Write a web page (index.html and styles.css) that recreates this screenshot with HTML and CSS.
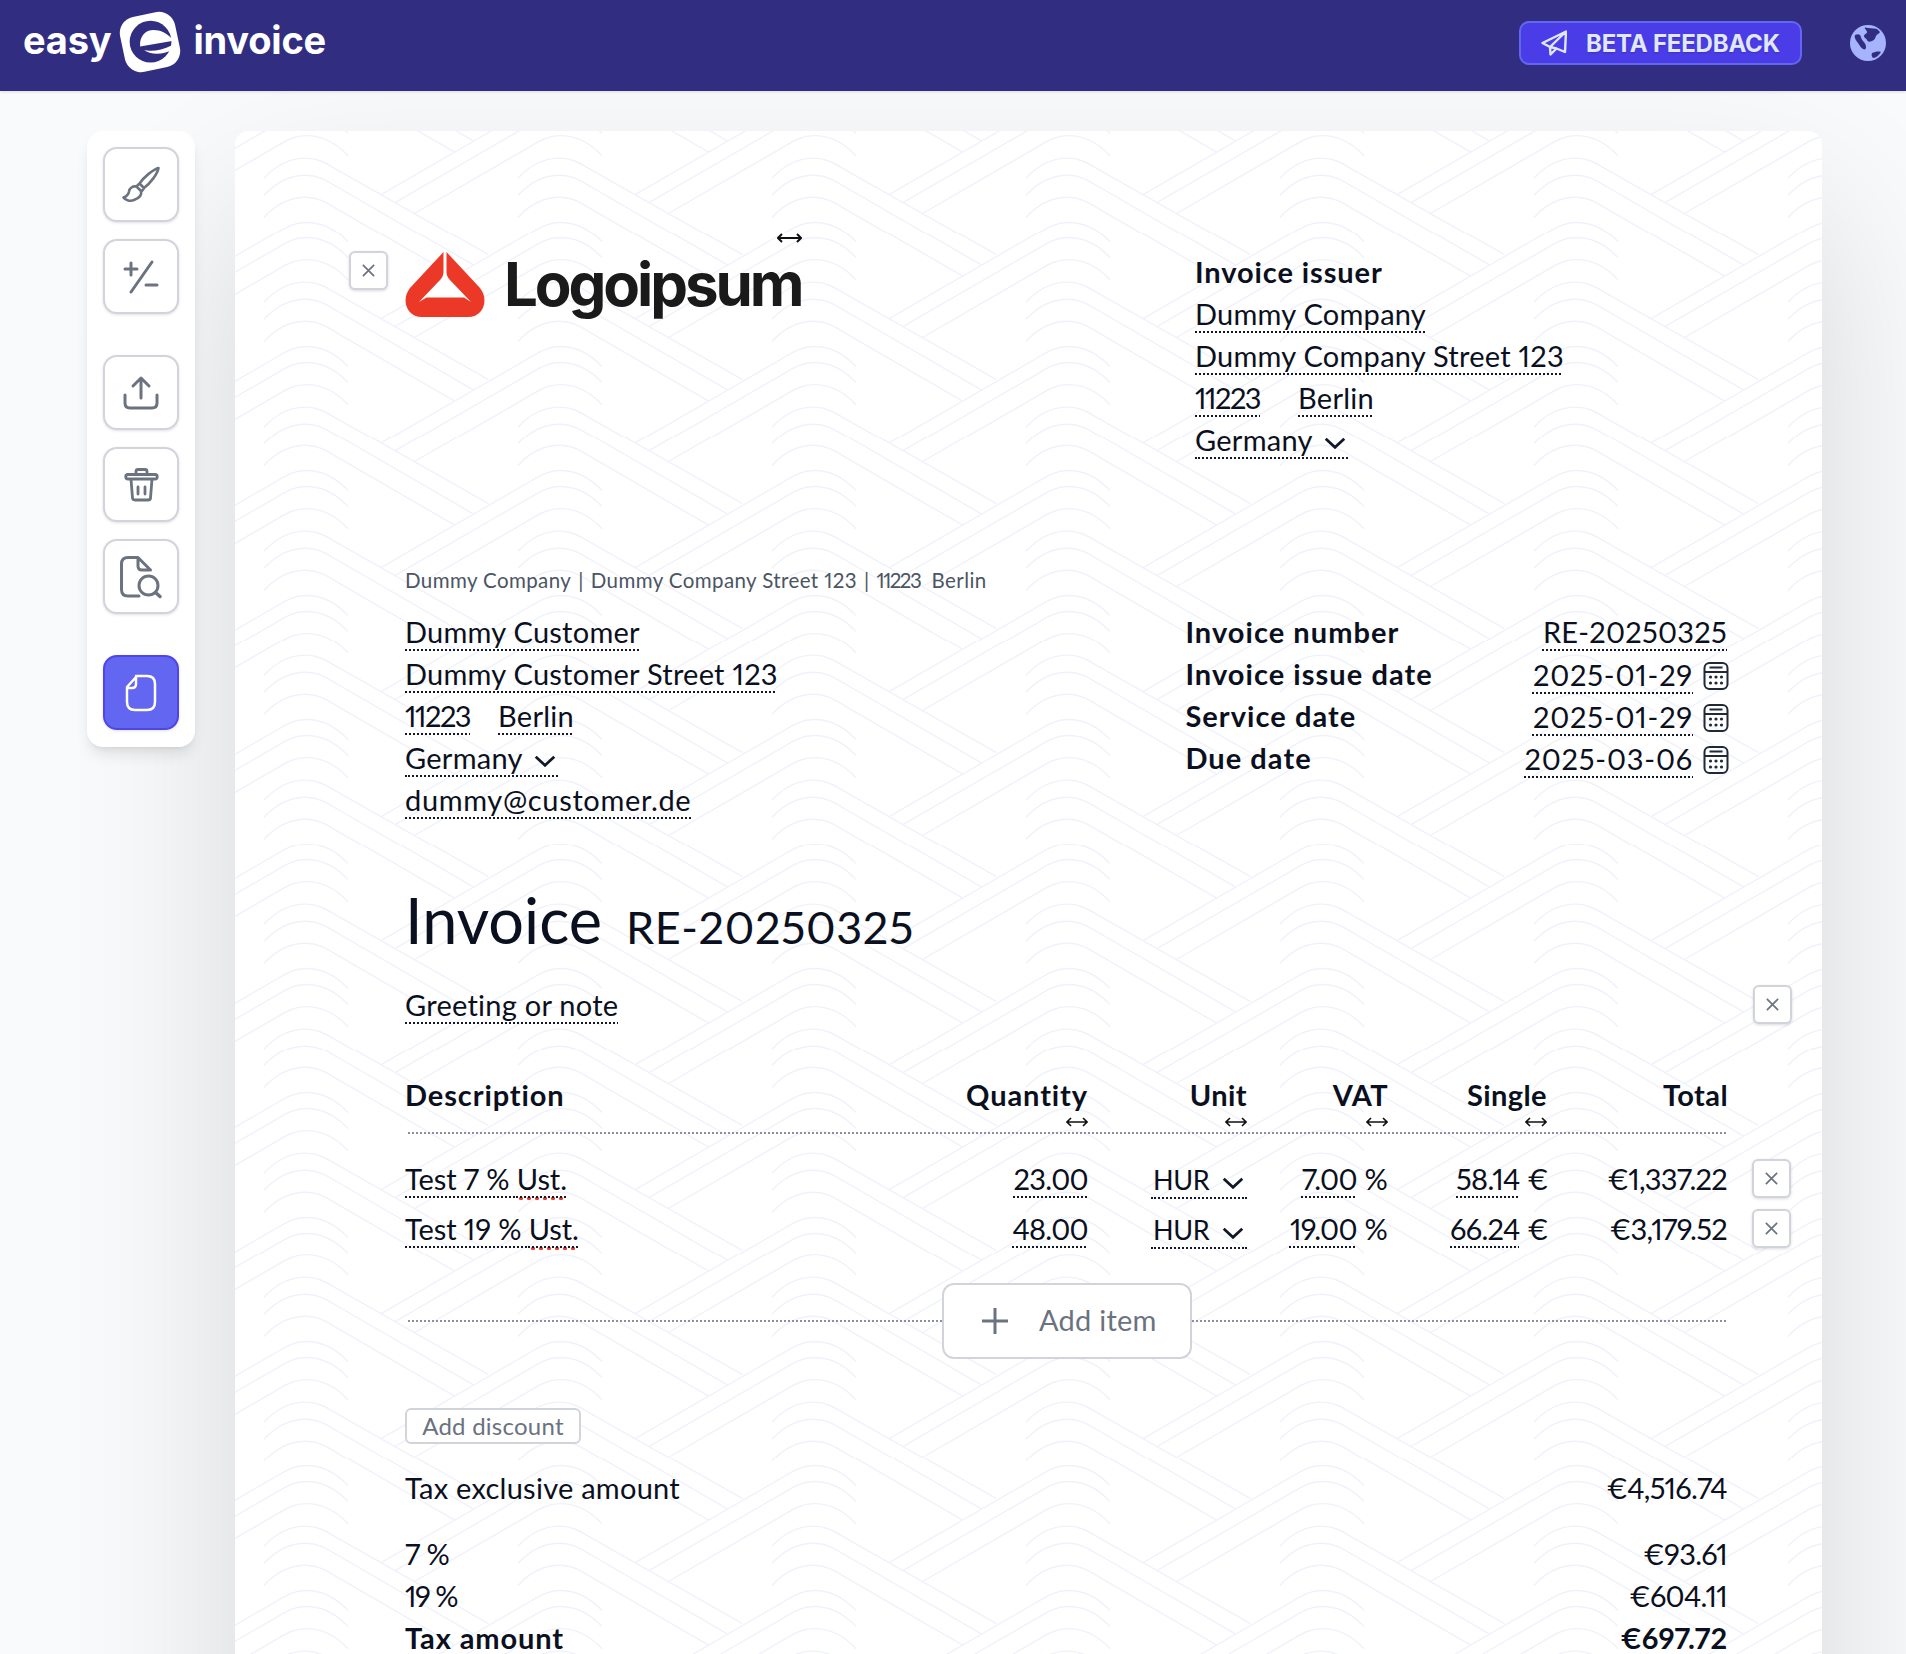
FILE: index.html
```
<!DOCTYPE html>
<html lang="en">
<head>
<meta charset="utf-8">
<title>easy e-invoice</title>
<link rel="stylesheet" href="styles.css">
</head>
<body>
<header class="topbar">
  <div class="brand">
    <span>easy</span>
    <svg class="brand-mark" viewBox="0 0 60 60"><rect x="4.500" y="4.500" width="51" height="51" rx="15" fill="#fff" transform="rotate(-12 30 30)"/><circle cx="30.500" cy="29.700" r="19" fill="#312e81"/><path d="M21 30.500C22 23 27 19 33 19 40 19 45 22 50 27V29L21 34zM24.500 37C30 39 40 38 50 33V37C42 42 30 42 24.500 37z" fill="#fff"/></svg>
    <span>invoice</span>
  </div>
  <div class="top-actions">
    <button class="beta"><svg class="plane" viewBox="0 0 26 26"><path d="M25 1.500 1.500 13l7.500 4L25 1.500l-1 20.500-8.500-3.500L9 17l.5 7.500 6-6" fill="none" stroke="#e0e7ff" stroke-width="2.400" stroke-linejoin="round"/></svg>BETA FEEDBACK</button>
    <svg class="globe" viewBox="0 0 36 36"><circle cx="18" cy="18" r="18" fill="#a5b4fc"/><path d="M15 2.500c4 1 8 .5 12 1.500l3 3c-1 2-3 2-4 4s-1 4-4 5-4 1-5-1-3-2-3-4 3-2 3-4-3-3-2-5zM5 10c2-1 4-1 5 0s1 4 3 6 3 4 3 6-1 3-3 2-3-3-5-6-4-5-3-8zM22 28c3-1 6-2 9-1-2 3-5 6-8 6-1-1-2-3-1-5z" fill="#312e81"/></svg>
  </div>
</header>

<main class="workspace">
  <aside class="toolbar">
    <div class="tool"><svg viewBox="0 0 76 76"><path d="M55.500 21c-5.500 1.500-14.500 9-19 15.500l4.500 4.500c6.500-5 13.500-14 14.500-20zM36 37l-2.500 2.500 5 5 2.500-3M33.500 39.500c-4-.5-7 1.500-7.500 5-.5 3-2.500 5-5.500 6 2 3 7 4 10.500 2.500 5-2 8-5 7-8.500" fill="none" stroke="#6b7280" stroke-width="2.600" stroke-linejoin="round"/></svg></div>
    <div class="tool"><svg viewBox="0 0 76 76"><path d="M22 30h12M28 24v12M49 23 28 53M43 46h11" fill="none" stroke="#6b7280" stroke-width="3" stroke-linecap="round"/></svg></div>
    <div class="tool tool-gap"><svg viewBox="0 0 76 76"><path d="M22 40v8q0 5 5 5h22q5 0 5-5v-8M38 43V23M30 31l8-8 8 8" fill="none" stroke="#6b7280" stroke-width="3" stroke-linecap="round" stroke-linejoin="round"/></svg></div>
    <div class="tool"><svg viewBox="0 0 76 76"><path d="M25 27.500h27a2 2 0 0 1 0 4.500H25a2 2 0 0 1 0-4.500zM33 27.500v-3q0-2 2-2h7q2 0 2 2v3M28 32l1.500 19q.2 2 2.500 2h13q2.300 0 2.500-2L49 32M35 40v7M42 40v7" fill="none" stroke="#6b7280" stroke-width="2.800" stroke-linecap="round" stroke-linejoin="round"/></svg></div>
    <div class="tool"><svg viewBox="0 0 76 76"><path d="M36 57H25q-6.500 0-6.500-6.500V25q0-6.500 6.500-6.500h10l12.500 12.500M35 18.500V27q0 4 4 4h8.500" fill="none" stroke="#6b7280" stroke-width="3" stroke-linejoin="round" stroke-linecap="round"/><circle cx="45.500" cy="46.500" r="9.500" fill="none" stroke="#6b7280" stroke-width="3"/><path d="M52.500 53.500 57 57.500" stroke="#6b7280" stroke-width="3.500" stroke-linecap="round"/></svg></div>
    <div class="tool tool-gap tool-active"><svg viewBox="0 0 76 76"><path d="M34 21h10q8 0 8 8v18q0 8-8 8H32q-8 0-8-8V32zM24 33h5q4 0 4-4v-8" fill="none" stroke="#fff" stroke-width="2.500" stroke-linejoin="round" stroke-linecap="round"/></svg></div>
  </aside>

  <article class="sheet">
    <section class="head-row">
      <button class="x x-logo"><svg viewBox="0 0 16 16"><path d="M2 2l12 12M14 2 2 14"/></svg></button>
      <div class="logo">
        <svg class="arrow arrow-logo" viewBox="0 0 25 10"><path d="M1 5h23M5 1 1 5l4 4M20 1l4 4-4 4"/></svg>
        <svg class="logo-mark" viewBox="0 0 80 65"><path d="M38.500 0 5 36C-4 47 1 65 17 65H63c16 0 21-18 12-29L41.500 0z" fill="#ec3827"/><path d="M38.500 0h3v20c0 3 1 5 3 7.500L66 50l-7-4.500H21.500L14 50l21.500-22.500c2-2.500 3-4.500 3-7.500z" fill="#fff"/></svg>
        <span class="logo-text">Logoipsum</span>
      </div>
      <div class="issuer">
        <div class="line strong">Invoice issuer</div>
        <div class="line"><span class="f">Dummy Company</span></div>
        <div class="line"><span class="f">Dummy Company Street 123</span></div>
        <div class="line"><span class="f zip">11223</span><span class="f city-a">Berlin</span></div>
        <div class="line"><span class="select">Germany<svg class="chev" viewBox="0 0 20 11"><path d="M1.500 1.500 10 9.500l8.500-8"/></svg></span></div>
      </div>
    </section>

    <div class="sender">Dummy Company<span class="pipe">|</span>Dummy Company Street 123<span class="pipe">|</span><span class="zip">11223</span>&nbsp; Berlin</div>

    <section class="address-row">
      <div class="customer">
        <div class="line"><span class="f">Dummy Customer</span></div>
        <div class="line"><span class="f">Dummy Customer Street 123</span></div>
        <div class="line"><span class="f zip">11223</span><span class="f city-b">Berlin</span></div>
        <div class="line"><span class="select">Germany<svg class="chev" viewBox="0 0 20 11"><path d="M1.500 1.500 10 9.500l8.500-8"/></svg></span></div>
        <div class="line"><span class="f email">dummy@customer.de</span></div>
      </div>
      <div class="meta">
        <div class="line meta-row"><span class="strong">Invoice number</span><span class="f">RE-20250325</span></div>
        <div class="line meta-row"><span class="strong">Invoice issue date</span><span class="date"><span class="f">2025-01-29</span><svg class="cal" viewBox="0 0 25 28"><rect x="1" y="1" width="23" height="26" rx="5"/><path d="M1 10h23M6 5.500h13"/><g class="dots"><circle cx="7" cy="15" r="1.600"/><circle cx="12.500" cy="15" r="1.600"/><circle cx="18" cy="15" r="1.600"/><circle cx="7" cy="21" r="1.600"/><circle cx="12.500" cy="21" r="1.600"/><circle cx="18" cy="21" r="1.600"/></g></svg></span></div>
        <div class="line meta-row"><span class="strong">Service date</span><span class="date"><span class="f">2025-01-29</span><svg class="cal" viewBox="0 0 25 28"><rect x="1" y="1" width="23" height="26" rx="5"/><path d="M1 10h23M6 5.500h13"/><g class="dots"><circle cx="7" cy="15" r="1.600"/><circle cx="12.500" cy="15" r="1.600"/><circle cx="18" cy="15" r="1.600"/><circle cx="7" cy="21" r="1.600"/><circle cx="12.500" cy="21" r="1.600"/><circle cx="18" cy="21" r="1.600"/></g></svg></span></div>
        <div class="line meta-row"><span class="strong">Due date</span><span class="date"><span class="f">2025-03-06</span><svg class="cal" viewBox="0 0 25 28"><rect x="1" y="1" width="23" height="26" rx="5"/><path d="M1 10h23M6 5.500h13"/><g class="dots"><circle cx="7" cy="15" r="1.600"/><circle cx="12.500" cy="15" r="1.600"/><circle cx="18" cy="15" r="1.600"/><circle cx="7" cy="21" r="1.600"/><circle cx="12.500" cy="21" r="1.600"/><circle cx="18" cy="21" r="1.600"/></g></svg></span></div>
      </div>
    </section>

    <h1 class="title"><span class="title-main">Invoice</span><span class="title-no">RE-20250325</span></h1>

    <div class="greeting line"><span class="f">Greeting or note</span><button class="x x-greeting"><svg viewBox="0 0 16 16"><path d="M2 2l12 12M14 2 2 14"/></svg></button></div>

    <section class="items">
      <div class="row row-head strong">
        <div>Description</div>
        <div class="num num-wide">Quantity<svg class="arrow" viewBox="0 0 22 10"><path d="M1 5h20M5 1 1 5l4 4M17 1l4 4-4 4"/></svg></div>
        <div class="num">Unit<svg class="arrow" viewBox="0 0 22 10"><path d="M1 5h20M5 1 1 5l4 4M17 1l4 4-4 4"/></svg></div>
        <div class="num">VAT<svg class="arrow" viewBox="0 0 22 10"><path d="M1 5h20M5 1 1 5l4 4M17 1l4 4-4 4"/></svg></div>
        <div class="num">Single<svg class="arrow" viewBox="0 0 22 10"><path d="M1 5h20M5 1 1 5l4 4M17 1l4 4-4 4"/></svg></div>
        <div class="num">Total</div>
      </div>
      <div class="row row-item">
        <div><span class="f item-name">Test 7 % <span class="typo">Ust.</span></span></div>
        <div class="num"><span class="f tight">23.00</span></div>
        <div class="num"><span class="select unit">HUR<svg class="chev" viewBox="0 0 20 11"><path d="M1.500 1.500 10 9.500l8.500-8"/></svg></span></div>
        <div class="num"><span class="f tight">7.00</span> %</div>
        <div class="num euro"><span class="f tight">58.14</span> €</div>
        <div class="num tight">€1,337.22</div>
        <button class="x x-row"><svg viewBox="0 0 16 16"><path d="M2 2l12 12M14 2 2 14"/></svg></button>
      </div>
      <div class="row row-item">
        <div><span class="f item-name">Test 19 % <span class="typo">Ust.</span></span></div>
        <div class="num"><span class="f tight">48.00</span></div>
        <div class="num"><span class="select unit">HUR<svg class="chev" viewBox="0 0 20 11"><path d="M1.500 1.500 10 9.500l8.500-8"/></svg></span></div>
        <div class="num"><span class="f tight">19.00</span> %</div>
        <div class="num euro"><span class="f tight">66.24</span> €</div>
        <div class="num tight">€3,179.52</div>
        <button class="x x-row"><svg viewBox="0 0 16 16"><path d="M2 2l12 12M14 2 2 14"/></svg></button>
      </div>
      <div class="add-row">
        <span class="rule"></span>
        <button class="add-item"><svg class="plus" viewBox="0 0 28 28"><path d="M14 1v26M1 14h26"/></svg><span class="add-label">Add item</span></button>
        <span class="rule"></span>
      </div>
    </section>

    <button class="add-discount">Add discount</button>

    <section class="totals">
      <div class="line total-row"><span>Tax exclusive amount</span><span class="tight">€4,516.74</span></div>
      <div class="line total-row total-gap"><span class="tight">7 %</span><span class="tight">€93.61</span></div>
      <div class="line total-row"><span class="tighter">19 %</span><span class="tight">€604.11</span></div>
      <div class="line total-row strong"><span>Tax amount</span><span class="bold-num">€697.72</span></div>
    </section>
  </article>
</main>
</body>
</html>
```
FILE: styles.css
```
* { box-sizing: border-box; }
html, body { margin: 0; height: 100%; overflow: hidden; }
body {
  background: #f9fafb;
  color: #0b1020;
  font-family: "Lato", "Liberation Sans", sans-serif;
  font-size: 29px;
  letter-spacing: .25px;
  font-variant-numeric: proportional-nums;
}
button { font-family: inherit; cursor: pointer; padding: 0; background: #fff; letter-spacing: inherit; }

.topbar {
  height: 91px;
  background: #312e81;
  display: flex;
  justify-content: space-between;
  align-items: center;
  padding: 0 20px 5px 23px;
  box-shadow: 0 1px 3px rgba(0,0,0,.12);
  position: relative;
  z-index: 2;
}
.brand {
  display: flex;
  align-items: center;
  color: #fff;
  font-family: "Inter", sans-serif;
  font-weight: 700;
  font-size: 38px;
  letter-spacing: -.2px;
  gap: 10px;
  margin-bottom: 6px;
}
.brand-mark { width: 66px; height: 66px; margin: 4px 0 0 -4px; flex: none; }
.top-actions { display: flex; align-items: center; gap: 48px; }
.beta {
  width: 283px;
  height: 44px;
  background: #4a3de8;
  border: 2px solid #6366f1;
  border-radius: 10px;
  color: #e0e7ff;
  font-family: "Inter", sans-serif;
  font-weight: 700;
  font-size: 24px;
  letter-spacing: -.2px;
  display: flex;
  align-items: center;
  gap: 19px;
  padding-left: 20px;
  text-shadow: 0 1px 2px rgba(0,0,0,.2);
}
.plane { width: 26px; height: 26px; flex: none; }
.globe { width: 36px; height: 36px; }

.workspace {
  display: flex;
  align-items: flex-start;
  gap: 40px;
  padding: 40px 0 0 87px;
}
.toolbar {
  position: relative;
  z-index: 1;
  width: 108px;
  height: 616px;
  flex: none;
  background: #fff;
  border-radius: 16px;
  padding: 16px;
  display: flex;
  flex-direction: column;
  gap: 17px;
  box-shadow: 0 10px 15px -3px rgba(0,0,0,.1), 0 4px 6px -4px rgba(0,0,0,.1);
}
.tool {
  width: 76px;
  height: 75px;
  flex: none;
  background: #fff;
  border: 2px solid #d1d5db;
  border-radius: 14px;
  box-shadow: 0 1px 3px rgba(0,0,0,.12);
  overflow: hidden;
}
.tool svg { display: block; width: 76px; height: 76px; margin: -2px; }
.tool-gap { margin-top: 24px; }
.tool-active { background: #6366f1; border-color: #4f46e5; }

.sheet {
  position: relative;
  width: 1587px;
  height: 1800px;
  flex: none;
  padding: 121px 95px 0 170px;
  border-radius: 14px 14px 0 0;
  box-shadow: 0 80px 170px 0 rgba(0,0,0,.14);
  background-color: #fff;
  background-size: 254px 124.4px;
  background-image: url("data:image/svg+xml,%3Csvg xmlns='http://www.w3.org/2000/svg' xmlns:xlink='http://www.w3.org/1999/xlink' width='254' height='124.4'%3E%3Cdefs%3E%3Cg id='u' fill='none' stroke='%23f0f1fb' stroke-width='1.4'%3E%3Cpath d='M29 47C41 34 56 27 71 27C83 27 91 32 101 38L253.500 124'/%3E%3Cpath d='M29 64C41 51 56 44 71 44C83 44 91 49 101 55L238.700 134.400'/%3E%3Cpath d='M29 86C41 73 56 66 71 66C83 66 91 71 101 77L219.700 145.500'/%3E%3Cpath d='M113 111C101 98 86 91 71 91C59 91 51 96 41 102L-108.300 188'/%3E%3Cpath d='M113 127C101 114 86 107 71 107C59 107 51 112 41 118L-94.500 196'/%3E%3Cpath d='M113 149C101 136 86 129 71 129C59 129 51 134 41 140L-75.400 207'/%3E%3C/g%3E%3C/defs%3E%3Cuse xlink:href='%23u'/%3E%3Cuse xlink:href='%23u' x='254'/%3E%3Cuse xlink:href='%23u' y='-124.400'/%3E%3Cuse xlink:href='%23u' x='254' y='-124.400'/%3E%3C/svg%3E");
}

.line { height: 42px; line-height: 42px; white-space: nowrap; }
.head-row .line, .address-row .line, .greeting.line { line-height: 40px; }
.strong { font-weight: 700; letter-spacing: .9px; }
.meta .strong { letter-spacing: 1.050px; }
.f {
  text-decoration: underline dotted #111827 1.5px;
  text-underline-offset: 6px;
}
.tight { letter-spacing: -.7px; }
.tighter { letter-spacing: -1.500px; }
.bold-num { letter-spacing: 0; }
.zip { letter-spacing: -1.500px; }
.email { letter-spacing: .65px; }
.item-name { letter-spacing: -.1px; }
.select {
  display: inline-flex;
  align-items: center;
  height: 36px;
  line-height: 36px;
  border-bottom: 2px dotted #111827;
  gap: 11px;
  padding-right: 2px;
}
.chev { width: 22px; height: 12px; fill: none; stroke: #111827; stroke-width: 2.500; margin-top: 6px; flex: none; }

.x {
  width: 39px;
  height: 39px;
  border: 2px solid #d1d5db;
  border-radius: 6px;
  box-shadow: 0 1px 3px rgba(0,0,0,.15);
  display: flex;
  align-items: center;
  justify-content: center;
  position: absolute;
}
.x svg { width: 15px; height: 15px; fill: none; stroke: #6b7280; stroke-width: 1.800; }
.x-logo { left: 114px; top: 120px; }
.x-greeting { right: 30px; top: 854px; }
.x-row { right: -64px; top: 1px; }

.head-row { display: flex; height: 210px; }
.logo { position: relative; width: 790px; display: flex; align-items: flex-start; gap: 19px; }
.logo-mark { width: 80px; height: 65px; flex: none; }
.logo-text {
  font-family: "Inter", sans-serif;
  font-weight: 700;
  font-size: 60px;
  letter-spacing: -3.100px;
  line-height: 60px;
  color: #1a1a1a;
  margin-top: 2px;
}
.arrow { width: 22px; height: 10px; fill: none; stroke: #111; stroke-width: 1.600; position: absolute; right: 0; bottom: -11px; }
.arrow-logo { width: 25px; left: 372px; right: auto; top: -19px; bottom: auto; stroke-width: 2; }
.city-a { margin-left: 38px; }
.city-b { margin-left: 28px; }

.sender { margin-top: 103px; height: 30px; line-height: 30px; font-size: 20.500px; color: #4b5563; white-space: nowrap; letter-spacing: .4px; }
.pipe { margin: 0 7px; }

.address-row { display: flex; margin-top: 17px; height: 210px; }
.customer { width: 781px; }
.meta { width: 542px; }
.meta-row { display: flex; justify-content: space-between; }
.date { display: flex; align-items: center; gap: 10px; margin-right: -2px; letter-spacing: .8px; }
.cal { width: 26px; height: 28px; fill: none; stroke: #1f2937; stroke-width: 2; margin-top: 2px; }
.cal .dots { fill: #1f2937; stroke: none; }

.title { margin: 58px 0 0; height: 82px; line-height: 80px; font-weight: 400; display: flex; align-items: baseline; gap: 24px; }
.title-main { font-size: 63px; letter-spacing: 0; }
.title-no { font-size: 45px; letter-spacing: .6px; }

.greeting { margin-top: 23px; }

.items { margin-top: 47px; }
.row {
  display: grid;
  grid-template-columns: 483px 200px 159px 141px 159px 180px;
  position: relative;
}
.row > div { position: relative; white-space: nowrap; }
.num { text-align: right; }
.row-head { height: 60px; line-height: 42px; border-bottom: 2px dotted #8d8da3; margin-left: 3px; margin-right: 1px; padding-bottom: 17px; grid-template-columns: 480px 200px 159px 141px 159px 179px; }
.row-head .num { letter-spacing: .4px; }
.row-head .num-wide { letter-spacing: .9px; }
.row-head > :first-child { margin-left: -3px; }
.row-head > :last-child { margin-right: -2px; }
.row-head:first-child { margin-bottom: 24px; }
.row-item { height: 50px; line-height: 42px; }
.row-item .euro { margin-right: -2px; }
.unit { width: 96px; justify-content: space-between; padding: 0 3px 0 2px; font-size: 27px; letter-spacing: -.4px; margin-left: auto; }

.add-row { display: flex; align-items: center; margin: 25px 1px 0 3px; }
.rule { flex: 1; border-top: 2px dotted #8d8da3; }
.add-item {
  width: 250px;
  height: 76px;
  background: #fff;
  border: 2px solid #d1d5db;
  border-radius: 12px;
  color: #6b7280;
  font-size: 29px;
  display: flex;
  align-items: center;
  gap: 30px;
  padding-left: 37px;
}
.add-label { margin-top: -3px; }
.plus { width: 28px; height: 28px; fill: none; stroke: #6b7280; stroke-width: 3; flex: none; }

.add-discount {
  display: block;
  margin-top: 49px;
  width: 176px;
  height: 36px;
  background: #fff;
  border: 2px solid #d1d5db;
  border-radius: 6px;
  color: #6b7280;
  font-size: 24px;
  line-height: 28px;
}

.totals { margin-top: 23px; }
.total-row { display: flex; justify-content: space-between; }
.total-gap { margin-top: 24px; }

.typo {
  background-image: radial-gradient(circle, #ef3b2d 1.7px, transparent 2px);
  background-size: 8px 5px;
  background-repeat: repeat-x;
  background-position: 0 100%;
  padding-bottom: 5px;
}
```
